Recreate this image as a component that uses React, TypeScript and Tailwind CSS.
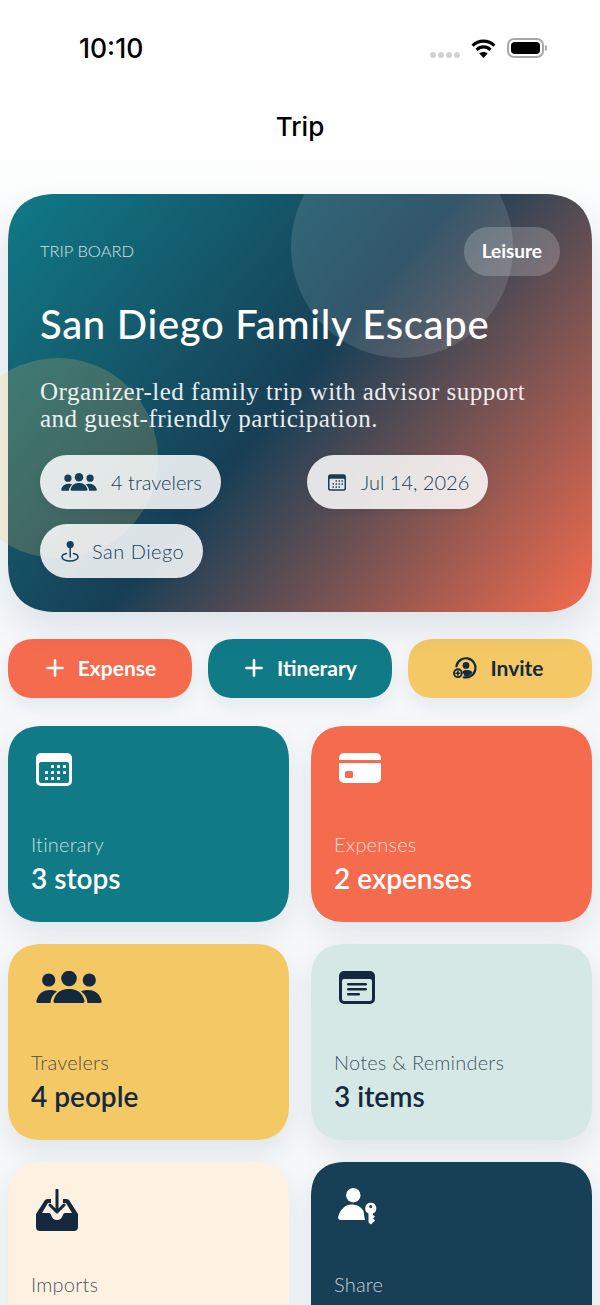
import { Plus } from "lucide-react";
import type { ReactNode } from "react";

function CalendarIcon({ className = "" }: { className?: string }) {
  const dots = [
    [15, 12], [21, 12], [27, 12],
    [9, 18], [15, 18], [21, 18], [27, 18],
    [9, 24], [15, 24], [21, 24],
  ];
  return (
    <svg viewBox="0 0 36 33" className={className} fill="currentColor">
      <path
        fillRule="evenodd"
        d="M5 0H31A5 5 0 0 1 36 5V28A5 5 0 0 1 31 33H5A5 5 0 0 1 0 28V5A5 5 0 0 1 5 0ZM5 9A2 2 0 0 0 3 11V28A2 2 0 0 0 5 30H31A2 2 0 0 0 33 28V11A2 2 0 0 0 31 9Z"
      />
      {dots.map(([x, y]) => (
        <rect key={`${x}-${y}`} x={x} y={y} width="3" height="3" rx="0.6" />
      ))}
    </svg>
  );
}

function CardIcon({ className = "" }: { className?: string }) {
  return (
    <svg viewBox="0 0 42 30" className={className} fill="currentColor">
      <path
        fillRule="evenodd"
        d="M5 0H37A5 5 0 0 1 42 5V7H0V5A5 5 0 0 1 5 0ZM0 10H42V25A5 5 0 0 1 37 30H5A5 5 0 0 1 0 25ZM7.5 18A1.5 1.5 0 0 0 6 19.5V23.5A1.5 1.5 0 0 0 7.5 25H12.5A1.5 1.5 0 0 0 14 23.5V19.5A1.5 1.5 0 0 0 12.5 18Z"
      />
    </svg>
  );
}

function PeopleIcon({ className = "" }: { className?: string }) {
  return (
    <svg viewBox="0 0 66 32" className={className} fill="currentColor">
      <circle cx="12.7" cy="9" r="6.6" />
      <circle cx="33" cy="7.5" r="7.8" />
      <circle cx="53.3" cy="9" r="6.6" />
      <path d="M20 32C17 32 17 30 18.5 27C21 20 27 18 33 18C39 18 45 20 47.5 27C49 30 49 32 46 32Z" />
      <path d="M2 32C0 32 0 30 1 28C3 22 8 19 14 19C17 19 19 19.5 21 20.5C17.5 23 15 26 14.5 32Z" />
      <path d="M64 32C66 32 66 30 65 28C63 22 58 19 52 19C49 19 47 19.5 45 20.5C48.5 23 51 26 51.5 32Z" />
    </svg>
  );
}

function NoteIcon({ className = "" }: { className?: string }) {
  return (
    <svg viewBox="0 0 36 33" className={className} fill="currentColor">
      <path
        fillRule="evenodd"
        d="M5 0H31A5 5 0 0 1 36 5V28A5 5 0 0 1 31 33H5A5 5 0 0 1 0 28V5A5 5 0 0 1 5 0ZM5 8A2 2 0 0 0 3 10V28A2 2 0 0 0 5 30H31A2 2 0 0 0 33 28V10A2 2 0 0 0 31 8Z"
      />
      <rect x="8" y="12" width="20" height="2.4" rx="1.2" />
      <rect x="8" y="17" width="20" height="2.4" rx="1.2" />
      <rect x="8" y="22" width="13" height="2.4" rx="1.2" />
    </svg>
  );
}

function TrayIcon({ className = "" }: { className?: string }) {
  return (
    <svg viewBox="0 0 42 42" className={className} fill="currentColor">
      <path d="M0 25L9 11Q10 10 12 10H15V14H12L6 24H13C14 24 15 25 15 26C16 29 18 31 21 31C24 31 26 29 27 26C27 25 28 24 29 24H36L30 14H27V10H30Q32 10 33 11L42 25V38Q42 42 38 42H4Q0 42 0 38Z" />
      <path d="M21 1V23M14 16L21 23L28 16" fill="none" stroke="currentColor" strokeWidth="3" strokeLinecap="round" strokeLinejoin="round" />
    </svg>
  );
}

function PersonKeyIcon({ className = "" }: { className?: string }) {
  return (
    <svg viewBox="1 1 38 37" className={`overflow-visible ${className}`} fill="currentColor">
      <circle cx="15.3" cy="7.2" r="7.2" />
      <path d="M3 32C0.5 32 -0.3 30.5 0.3 28.5C2 21 8 16.5 13.5 16.5C18 16.5 23 18.5 25.5 23C25.8 26 26.5 29 27 32Z" />
      <path
        fillRule="evenodd"
        d="M32.7 14.8A5.6 5.6 0 0 1 35 25.5V27L37 28.5L35 30.5L37 32.5L33 36.5L30.5 34.5V25.5A5.6 5.6 0 0 1 32.7 14.8ZM32.7 17A1.6 1.6 0 1 0 32.7 20.2A1.6 1.6 0 1 0 32.7 17Z"
      />
    </svg>
  );
}

function PinIcon({ className = "" }: { className?: string }) {
  return (
    <svg viewBox="0 0 18 21" className={className} fill="none" stroke="currentColor" strokeWidth="1.5">
      <circle cx="9.2" cy="3.6" r="3.6" fill="currentColor" stroke="none" />
      <path d="M9.2 6V16" strokeLinecap="round" />
      <path d="M5.5 12.6C2.8 13.2 1 14.4 1 16C1 18.3 4.6 20 9 20C13.4 20 17 18.3 17 16C17 14.4 15.2 13.2 12.5 12.6" strokeLinecap="round" />
    </svg>
  );
}

function InviteIcon({ className = "" }: { className?: string }) {
  return (
    <svg viewBox="0 0 24 22" className={className} fill="none" stroke="currentColor">
      <path d="M3.4 9.2A9.6 9.6 0 1 1 11 20.3" strokeWidth="2.2" strokeLinecap="round" />
      <circle cx="13" cy="8.4" r="3.4" fill="currentColor" stroke="none" />
      <path d="M9.3 15.6C10.2 13.5 11.5 13 13.2 13C16 13 18.4 13.6 19.6 15.4C18 18 15.2 19.6 11.6 19.8C11.4 18 10.6 16.6 9.3 15.6Z" fill="currentColor" stroke="none" />
      <circle cx="4.9" cy="16.2" r="3.9" strokeWidth="1.9" />
      <path d="M4.9 14.3V18.1M3 16.2H6.8" strokeWidth="1.6" strokeLinecap="round" />
    </svg>
  );
}

function StatusIcons() {
  return (
    <div className="flex items-center">
      <div className="flex gap-[2px] mt-[14px] mr-[11px]">
        <span className="size-[6px] rounded-full bg-[#d2d2d2]" />
        <span className="size-[6px] rounded-full bg-[#d2d2d2]" />
        <span className="size-[6px] rounded-full bg-[#d2d2d2]" />
        <span className="size-[6px] rounded-full bg-[#d2d2d2]" />
      </div>
      <svg viewBox="0 0 25 19" className="w-[25px] h-[19px] mr-[11px]" fill="none" stroke="black" strokeWidth="3.2">
        <path d="M1.6 6.6C7.8 0.6 17.2 0.6 23.4 6.6" />
        <path d="M5.6 10.8C9.6 7 15.4 7 19.4 10.8" />
        <path d="M12.5 19L8.4 14.6C10.8 12.6 14.2 12.6 16.6 14.6Z" fill="black" stroke="none" />
      </svg>
      <div className="w-[37px] h-[20px] rounded-[7px] border-2 border-[#a8a8a8] p-[2px]">
        <div className="w-full h-full rounded-[4px] bg-black" />
      </div>
      <span className="w-[2px] h-[6px] ml-[1px] rounded-r-full bg-[#a8a8a8]" />
    </div>
  );
}

function Chip({ icon, label, gap, text }: { icon: ReactNode; label: string; gap: string; text: string }) {
  return (
    <div className={`w-fit h-[54px] rounded-full bg-white/85 pl-[21px] pr-[19px] flex items-center ${gap} ${text} font-light text-[#173f56] text-[20px] shadow-[0_2px_6px_rgba(23,63,86,0.1)]`}>
      {icon}
      <span>{label}</span>
    </div>
  );
}

function ActionButton({ icon, label, tone, gap }: { icon: ReactNode; label: string; tone: string; gap: string }) {
  return (
    <div className={`w-[184px] h-[59px] rounded-[28px] [corner-shape:superellipse(1.3)] flex items-center justify-center ${gap} text-[21px] leading-[26px] font-bold pb-[1px] shadow-[0_8px_18px_rgba(23,63,86,0.07)] ${tone}`}>
      {icon}
      <span>{label}</span>
    </div>
  );
}

function Tile({
  icon,
  label,
  value,
  tone,
  labelTone,
  iconBox = "h-[80px]",
}: {
  icon: ReactNode;
  label: string;
  value?: string;
  tone: string;
  labelTone: string;
  iconBox?: string;
}) {
  return (
    <div className={`h-[196px] rounded-[36px] [corner-shape:superellipse(1.3)] pl-[23px] pr-4 pt-[27px] shadow-[0_12px_26px_rgba(23,63,86,0.09)] ${tone}`}>
      <div className={`${iconBox} pl-[5px]`}>{icon}</div>
      <div className={`text-[20px] leading-[24px] -mt-[1px] mb-[2px] font-light tracking-[0.2px] ${labelTone}`}>{label}</div>
      {value && <div className="mt-[5px] text-[28px] leading-[34px] font-semibold">{value}</div>}
    </div>
  );
}

export default function App() {
  return (
    <div className="relative w-[600px] h-[1305px] overflow-hidden bg-linear-to-b from-white from-[10%] to-[#f5f7f9] to-[22%] font-['Lato',sans-serif]">
      <div className="h-[96px] pl-[79px] pr-[53px] flex items-center justify-between font-['Inter',sans-serif]">
        <span className="text-[26.5px] font-medium text-black mt-[2px]">10:10</span>
        <StatusIcons />
      </div>
      <div className="h-[60px] flex items-center justify-center text-[26px] font-medium text-black font-['Inter',sans-serif]">
        Trip
      </div>

      <div className="relative mx-2 mt-[38px] h-[418px] rounded-[50px] [corner-shape:superellipse(1.3)] px-8 pt-[33px] text-white bg-[linear-gradient(130deg,#107a87_0%,#173f56_48%,#f56b4d_100%)] shadow-[0_16px_32px_rgba(23,63,86,0.1)]">
        <div className="absolute left-[283px] top-[-58px] size-[222px] rounded-full bg-white/12" />
        <div className="absolute left-[-50px] top-[164px] size-[200px] rounded-full bg-[#f4c865]/20" />
        <div className="relative">
          <div className="h-[49px] flex items-center justify-between">
            <span className="text-[16.5px] font-light text-white/80 -mt-[1px]">TRIP BOARD</span>
            <span className="h-[49px] px-[18px] rounded-full bg-white/20 flex items-center text-[19px] font-bold">Leisure</span>
          </div>
          <h1 className="mt-[23px] text-[40px] leading-[50px] font-medium tracking-[0.7px]">San Diego Family Escape</h1>
          <p className="mt-[29px] text-[25px] leading-[27px] tracking-[0.5px] text-white/90 font-['Liberation_Serif',serif]">
            Organizer-led family trip with advisor support and guest-friendly participation.
          </p>
          <div className="mt-[23px] grid grid-cols-2 gap-x-[14px] gap-y-[15px]">
            <Chip gap="gap-[14px]" text="tracking-[0px]" icon={<PeopleIcon className="w-[36px] h-[18px]" />} label="4 travelers" />
            <Chip gap="gap-[15px]" text="tracking-[0px]" icon={<CalendarIcon className="w-[18px] h-[17px]" />} label="Jul 14, 2026" />
            <Chip gap="gap-[13px]" text="tracking-[0.5px]" icon={<PinIcon className="w-[18px] h-[21px]" />} label="San Diego" />
          </div>
        </div>
      </div>

      <div className="mx-2 mt-[27px] flex gap-4">
        <ActionButton gap="gap-[10px]" tone="pr-[2px] bg-[#f56b4d] text-white" icon={<Plus className="size-[26px]" strokeWidth={2.4} />} label="Expense" />
        <ActionButton gap="gap-[10px]" tone="pr-[2px] bg-[#107a87] text-white" icon={<Plus className="size-[26px]" strokeWidth={2.4} />} label="Itinerary" />
        <ActionButton gap="gap-[13px]" tone="pr-[3px] bg-[#f4c865] text-[#14293d]" icon={<InviteIcon className="w-[24px] h-[22px]" />} label="Invite" />
      </div>

      <div className="mx-2 mt-[28px] grid grid-cols-2 gap-x-[22px] gap-y-[22px]">
        <Tile tone="bg-[#107a87] text-white" labelTone="text-white/75" icon={<CalendarIcon className="w-[36px] h-[33px]" />} label="Itinerary" value="3 stops" />
        <Tile tone="bg-[#f56b4d] text-white" labelTone="text-white/75" icon={<CardIcon className="w-[42px] h-[30px]" />} label="Expenses" value="2 expenses" />
        <Tile tone="bg-[#f4c865] text-[#14293d]" labelTone="text-[#14293d]/80" icon={<PeopleIcon className="w-[66px] h-[32px]" />} label="Travelers" value="4 people" />
        <Tile tone="bg-[#d6e8e6] text-[#14293d]" labelTone="text-[#14293d]/80" icon={<NoteIcon className="w-[36px] h-[33px]" />} label="Notes & Reminders" value="3 items" />
        <Tile iconBox="h-[84px]" tone="bg-[#fdf1e1] text-[#14293d]" labelTone="text-[#14293d]/80" icon={<TrayIcon className="w-[42px] h-[42px]" />} label="Imports" />
        <Tile iconBox="h-[84px]" tone="bg-[#173f56] text-white" labelTone="text-white/75" icon={<PersonKeyIcon className="w-[38px] h-[37px]" />} label="Share" />
      </div>
    </div>
  );
}
